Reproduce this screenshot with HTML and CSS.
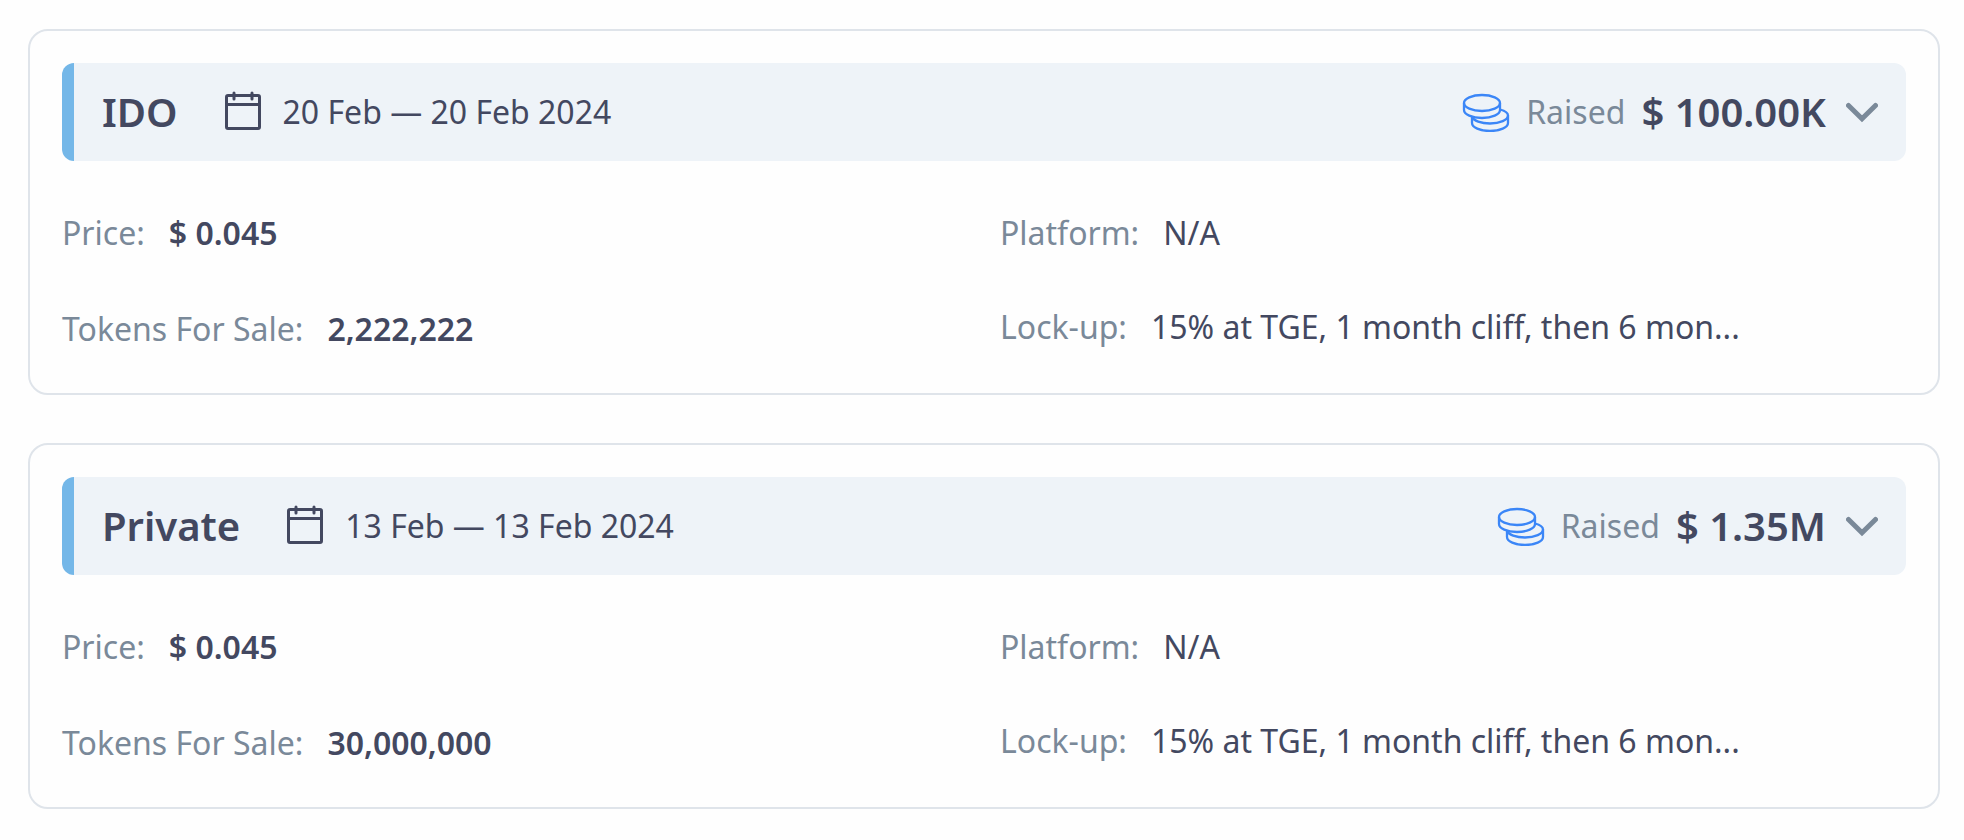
FILE: index.html
```html
<!DOCTYPE html>
<html lang="en">
<head>
  <meta charset="utf-8">
  <title>Token Sale Rounds</title>
  <link rel="stylesheet" href="styles.css">
</head>
<body>
  <!-- shared icons -->
  <svg class="sprite" aria-hidden="true">
    <symbol id="calendar" viewBox="0 0 36 42">
      <rect x="1.5" y="4.5" width="33" height="33" rx="1.5" fill="none" stroke="currentColor" stroke-width="3"/>
      <path d="M2 13.5H34M9 2V8M27 2V8" fill="none" stroke="currentColor" stroke-width="3" stroke-linecap="round"/>
    </symbol>
    <symbol id="coins" viewBox="-1 -2 48 40">
      <g fill="none" stroke="currentColor" stroke-width="2.3">
        <ellipse cx="19" cy="9" rx="18" ry="8"/>
        <path d="M1 9v7c0 4.400 8 8 18 8s18-3.600 18-8V9"/>
        <path d="M37 15.500c5 1.300 8 3.500 8 6 0 4.400-8 8-18 8-9 0-16.500-2.800-17.800-6.500"/>
        <path d="M9 22v7c0 4.400 8 8 18 8s18-3.600 18-8v-7.500"/>
      </g>
    </symbol>
    <symbol id="chevron" viewBox="0 0 32 22">
      <path d="M2.500 4.500L16 17.700 29.500 4.500" fill="none" stroke="currentColor" stroke-width="5" stroke-linecap="round"/>
    </symbol>
  </svg>

  <main class="rounds">
    <section class="card">
      <header class="card-header">
        <h2>IDO</h2>
        <div class="dates">
          <svg class="icon-calendar"><use href="#calendar"/></svg>
          <span>20 Feb — 20 Feb 2024</span>
        </div>
        <div class="raised">
          <svg class="icon-coins"><use href="#coins"/></svg>
          <span class="label">Raised</span>
          <strong>$ 100.00K</strong>
        </div>
        <button class="toggle" type="button" aria-label="Toggle details">
          <svg class="icon-chevron"><use href="#chevron"/></svg>
        </button>
      </header>
      <div class="details">
        <dl>
          <div class="row"><dt>Price:</dt><dd class="bold">$ 0.045</dd></div>
          <div class="row"><dt>Tokens For Sale:</dt><dd class="bold">2,222,222</dd></div>
        </dl>
        <dl class="terms">
          <div class="row"><dt>Platform:</dt><dd>N/A</dd></div>
          <div class="row"><dt>Lock-up:</dt><dd>15% at TGE, 1 month cliff, then 6 mon...</dd></div>
        </dl>
      </div>
    </section>

    <section class="card">
      <header class="card-header">
        <h2>Private</h2>
        <div class="dates">
          <svg class="icon-calendar"><use href="#calendar"/></svg>
          <span>13 Feb — 13 Feb 2024</span>
        </div>
        <div class="raised">
          <svg class="icon-coins"><use href="#coins"/></svg>
          <span class="label">Raised</span>
          <strong>$ 1.35M</strong>
        </div>
        <button class="toggle" type="button" aria-label="Toggle details">
          <svg class="icon-chevron"><use href="#chevron"/></svg>
        </button>
      </header>
      <div class="details">
        <dl>
          <div class="row"><dt>Price:</dt><dd class="bold">$ 0.045</dd></div>
          <div class="row"><dt>Tokens For Sale:</dt><dd class="bold">30,000,000</dd></div>
        </dl>
        <dl class="terms">
          <div class="row"><dt>Platform:</dt><dd>N/A</dd></div>
          <div class="row"><dt>Lock-up:</dt><dd>15% at TGE, 1 month cliff, then 6 mon...</dd></div>
        </dl>
      </div>
    </section>
  </main>
</body>
</html>
```
FILE: styles.css
```css
* {
  box-sizing: border-box;
}
body {
  margin: 0;
  background-color: #fefefe;
  color: #434860;
  font-family: "Noto Sans", sans-serif;
  font-size: 32px;
  line-height: 48px;
}
.sprite {
  display: none;
}
.rounds {
  display: flex;
  flex-direction: column;
  gap: 48px;
  padding: 29px 24px 29px 28px;
}
.card {
  padding: 32px 32px 40px;
  border: 2px solid #dfe4ea;
  border-radius: 20px;
}
.card-header {
  display: flex;
  align-items: center;
  padding: 25px 28px;
  background-color: #eef3f8;
  border-left: 12px solid #74b7e8;
  border-radius: 12px;
}
h2 {
  margin: 0;
  font-size: 40px;
  font-weight: 600;
}
.dates {
  display: flex;
  align-items: center;
  gap: 22px;
  margin-left: 47px;
}
.raised {
  display: flex;
  align-items: center;
  gap: 16px;
  margin-left: auto;
}
.raised strong {
  font-size: 40px;
  font-weight: 600;
}
.label,
dt {
  color: #7a8999;
}
.toggle {
  display: flex;
  margin-left: 20px;
  padding: 0;
  border: none;
  background: none;
  color: #7a8999;
  cursor: pointer;
}
.icon-calendar {
  width: 36px;
  height: 42px;
}
.icon-coins {
  width: 48px;
  height: 40px;
  color: #3b86f7;
}
.icon-chevron {
  width: 32px;
  height: 22px;
}
.details {
  display: grid;
  grid-template-columns: 1fr 1fr;
  gap: 32px;
  margin-top: 48px;
}
dl {
  display: flex;
  flex-direction: column;
  gap: 48px;
  margin: 0;
}
.terms {
  gap: 46px;
}
.row {
  display: flex;
  gap: 24px;
}
dd {
  margin: 0;
}
.bold {
  font-weight: 600;
}
```
